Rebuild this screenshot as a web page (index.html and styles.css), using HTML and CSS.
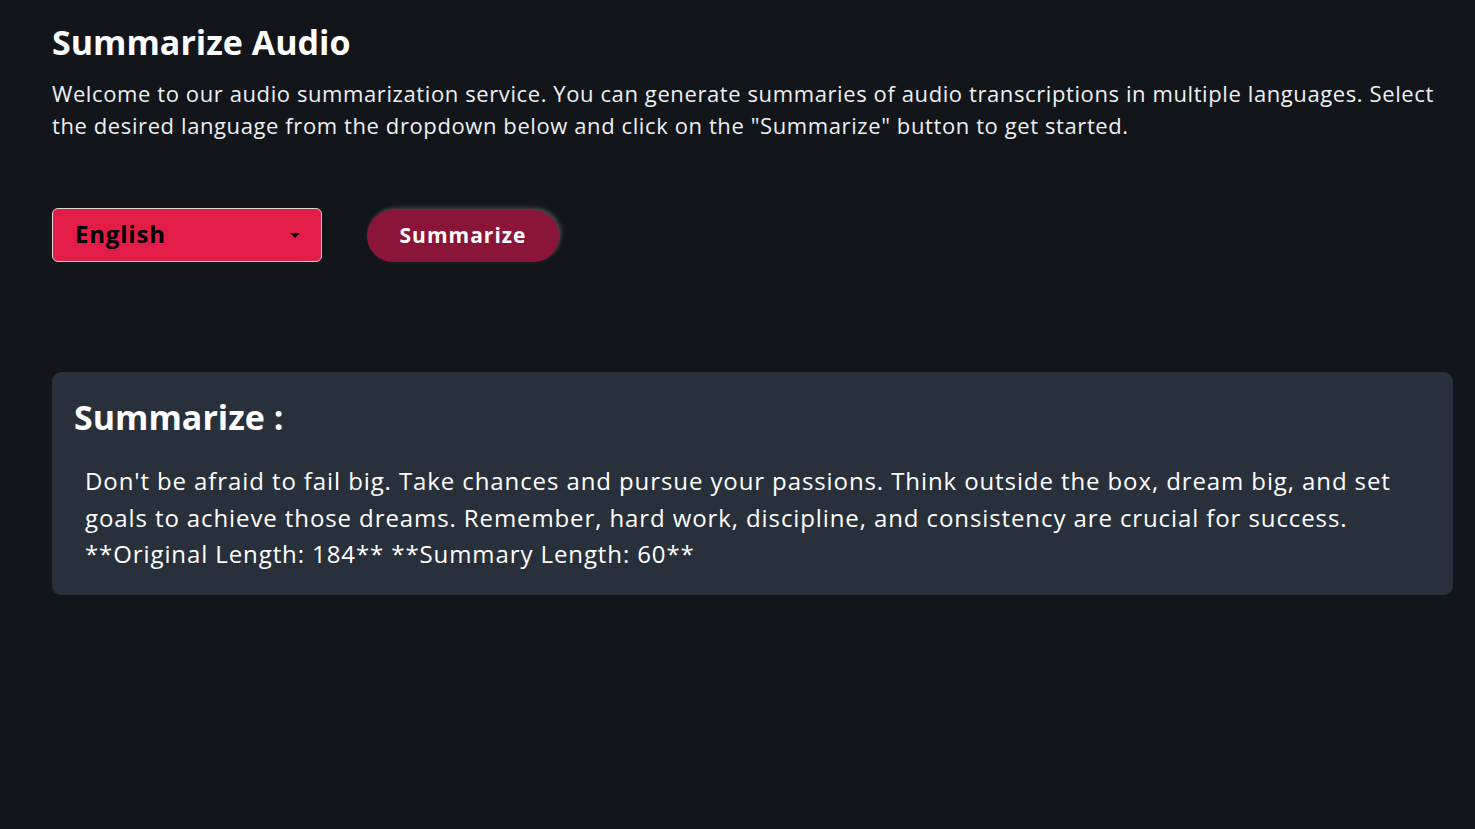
FILE: index.html
```html
<!DOCTYPE html>
<html lang="en">
<head>
<meta charset="utf-8">
<title>Summarize Audio</title>
<link rel="stylesheet" href="styles.css">
</head>
<body>
<main class="page">
  <h1 class="title">Summarize Audio</h1>
  <p class="intro">Welcome to our audio summarization service. You can generate summaries of audio transcriptions in multiple languages. Select the desired language from the dropdown below and click on the "Summarize" button to get started.</p>
  <div class="controls">
    <div class="select">
      <span class="select-label">English</span>
      <svg class="caret" width="10" height="5" viewBox="0 0 10 5"><path d="M0 0H10L5 5Z" fill="#000"/></svg>
    </div>
    <button class="btn">Summarize</button>
  </div>
  <section class="card">
    <h2 class="card-title">Summarize :</h2>
    <p class="card-text">Don't be afraid to fail big. Take chances and pursue your passions. Think outside the box, dream big, and set goals to achieve those dreams. Remember, hard work, discipline, and consistency are crucial for success. **Original Length: 184** **Summary Length: 60**</p>
  </section>
</main>
</body>
</html>
```
FILE: styles.css
```css
html, body {
  margin: 0;
  padding: 0;
  background: #121519;
}
body {
  font-family: "Open Sans", "Noto Sans", sans-serif;
  color: #ffffff;
}
.page {
  padding: 22px 22px 0 52px;
}
.title {
  margin: 0;
  font-size: 34px;
  font-weight: 700;
  line-height: 40px;
}
.intro {
  margin: 15px 0 0;
  font-size: 22px;
  letter-spacing: 0.6px;
  line-height: 32px;
  color: #eef0f4;
}
.controls {
  display: flex;
  align-items: flex-start;
  gap: 45px;
  margin-top: 67px;
}
.select {
  box-sizing: border-box;
  width: 270px;
  height: 54px;
  background: #e11d48;
  border: 1px solid #d8d8d8;
  border-radius: 6px;
  display: flex;
  align-items: center;
  justify-content: space-between;
  padding: 0 21px 3px 22px;
}
.select-label {
  font-size: 24px;
  font-weight: 700;
  letter-spacing: 0.8px;
  color: #000;
}
.caret {
  display: block;
  margin-top: 3px;
}
.btn {
  width: 192px;
  height: 52px;
  margin-top: 2px;
  padding: 0 0 2px;
  border: none;
  border-radius: 26px;
  background: #8a1538;
  color: #fff;
  font-family: inherit;
  font-size: 21px;
  font-weight: 700;
  letter-spacing: 1px;
  box-shadow: 2px -2px 4px rgba(210, 210, 210, 0.3);
}
.card {
  margin-top: 110px;
  background: #28313b;
  border-radius: 9px;
  padding: 25px 22px 22px 22px;
}
.card-title {
  margin: 0;
  font-size: 34px;
  font-weight: 700;
  line-height: 40px;
}
.card-text {
  margin: 26px 0 0 11px;
  font-size: 24px;
  letter-spacing: 0.9px;
  line-height: 36.5px;
}
```
